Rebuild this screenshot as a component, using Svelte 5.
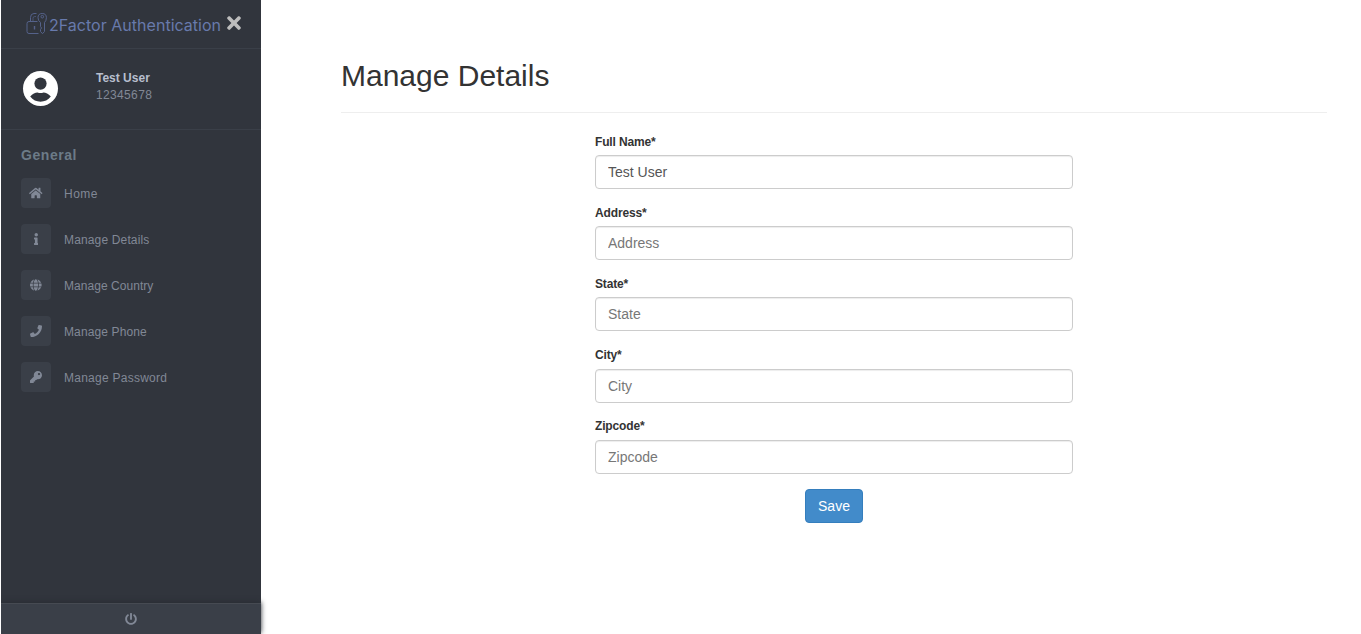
<script>
  const menu = [
    { label: 'Home', spacing: 0.5, w: 576, d: 'M280.37 148.26L96 300.11V464a16 16 0 0 0 16 16l112.06-.29a16 16 0 0 0 15.92-16V368a16 16 0 0 1 16-16h64a16 16 0 0 1 16 16v95.64a16 16 0 0 0 16 16.05L464 480a16 16 0 0 0 16-16V300L295.67 148.26a12.19 12.19 0 0 0-15.3 0zM571.6 251.47L488 182.56V44.05a12 12 0 0 0-12-12h-56a12 12 0 0 0-12 12v72.61L318.47 43a48 48 0 0 0-61 0L4.34 251.47a12 12 0 0 0-1.6 16.9l25.5 31A12 12 0 0 0 45.15 301l235.22-193.74a12.19 12.19 0 0 1 15.3 0L530.9 301a12 12 0 0 0 16.9-1.6l25.5-31a12 12 0 0 0-1.7-16.93z' },
    { label: 'Manage Details', spacing: 0.15, w: 192, d: 'M20 424.229h20V279.771H20c-11.046 0-20-8.954-20-20V212c0-11.046 8.954-20 20-20h112c11.046 0 20 8.954 20 20v212.229h20c11.046 0 20 8.954 20 20V492c0 11.046-8.954 20-20 20H20c-11.046 0-20-8.954-20-20v-47.771c0-11.046 8.954-20 20-20zM96 0C56.235 0 24 32.235 24 72s32.235 72 72 72 72-32.235 72-72S135.764 0 96 0z' },
    { label: 'Manage Country', spacing: 0.05, w: 496, d: 'M336.5 160C322 70.7 287.8 8 248 8s-74 62.7-88.5 152h177zM152 256c0 22.2 1.2 43.5 3.3 64h185.3c2.1-20.5 3.3-41.8 3.3-64s-1.2-43.5-3.3-64H155.3c-2.1 20.5-3.3 41.8-3.3 64zm324.7-96c-28.6-67.9-86.5-120.4-158-141.6 24.4 33.8 41.2 84.7 50 141.6h108zM177.2 18.4C105.8 39.6 47.8 92.1 19.3 160h108c8.7-56.9 25.5-107.8 49.9-141.6zM487.4 192H372.7c2.1 21 3.3 42.5 3.3 64s-1.2 43-3.3 64h114.6c5.5-20.5 8.6-41.8 8.6-64s-3.1-43.5-8.5-64zM120 256c0-21.5 1.2-43 3.3-64H8.6C3.2 212.5 0 233.8 0 256s3.2 43.5 8.6 64h114.6c-2-21-3.2-42.5-3.2-64zm39.5 96c14.5 89.3 48.7 152 88.5 152s74-62.7 88.5-152h-177zm159.3 141.6c71.4-21.2 129.4-73.7 158-141.6h-108c-8.8 56.9-25.6 107.8-50 141.6zM19.3 352c28.6 67.9 86.5 120.4 158 141.6-24.4-33.8-41.2-84.7-50-141.6h-108z' },
    { label: 'Manage Phone', spacing: 0.12, w: 512, d: 'M493.4 24.6l-104-24c-11.3-2.6-22.9 3.3-27.5 13.9l-48 112c-4.2 9.8-1.4 21.3 6.9 28l60.6 49.6c-36 76.7-98.9 140.5-177.2 177.2l-49.6-60.6c-6.8-8.3-18.2-11.1-28-6.9l-112 48C3.9 366.5-2 378.1.6 389.4l24 104C27.1 504.2 36.7 512 48 512c256.1 0 464-207.5 464-464 0-11.2-7.7-20.9-18.6-23.4z' },
    { label: 'Manage Password', spacing: 0.25, w: 512, d: 'M512 176.001C512 273.203 433.202 352 336 352c-11.22 0-22.19-1.062-32.827-3.069l-24.012 27.014A23.999 23.999 0 0 1 261.223 384H224v40c0 13.255-10.745 24-24 24h-40v40c0 13.255-10.745 24-24 24H24c-13.255 0-24-10.745-24-24v-78.059c0-6.365 2.529-12.47 7.029-16.971l161.802-161.802C163.108 213.814 160 195.271 160 176 160 78.798 238.797.001 335.999 0 433.488-.001 512 78.511 512 176.001zM336 128c0 26.51 21.49 48 48 48s48-21.49 48-48-21.49-48-48-48-48 21.49-48 48z' }
  ];

  let fields = $state([
    { id: 'name', label: 'Full Name', value: 'Test User' },
    { id: 'address', label: 'Address', value: '' },
    { id: 'state', label: 'State', value: '' },
    { id: 'city', label: 'City', value: '' },
    { id: 'zipcode', label: 'Zipcode', value: '' }
  ]);
</script>

<div class="page">
  <nav class="sidebar">
    <div class="brand">
      <svg class="logo" width="24" height="26" viewBox="0 0 24 26">
        <g fill="none" stroke="#55628a" stroke-width="1">
          <path d="M11.5 10.5H3Q1 10.5 1 12.5V20.5Q1 22.5 3 22.5H12.5" />
          <path d="M4.5 10.5V6.5Q4.5 2.5 8 2.5H10.5" />
          <path d="M7 10.5V7.2Q7 5.5 8.8 5.5H10" stroke-width=".7" />
          <path d="M8.5 15V18.5" stroke-width="1.4" />
          <path d="M14.5 11.5Q12 9.7 12 6.7Q12 2.5 16.2 2.5Q20.4 2.5 20.4 6.7Q20.4 9.7 18.5 11.5V20.5L16.5 22.7L14.5 20.5V18.5L15.5 17L14.5 15.5Z" />
          <circle cx="16.3" cy="5.7" r="1.3" />
        </g>
      </svg>
      <span class="name">2Factor Authentication</span>
      <button class="close" aria-label="Close">
        <svg width="14" height="20" viewBox="0 0 352 512"><path fill="currentColor" d="M242.72 256l100.07-100.07c12.28-12.28 12.28-32.19 0-44.48l-22.24-22.24c-12.28-12.28-32.19-12.28-44.48 0L176 189.28 75.93 89.21c-12.28-12.28-32.19-12.28-44.48 0L9.21 111.45c-12.28 12.28-12.28 32.19 0 44.48L109.28 256 9.21 356.07c-12.28 12.28-12.28 32.19 0 44.48l22.24 22.24c12.28 12.28 32.2 12.28 44.48 0L176 322.72l100.07 100.07c12.28 12.28 32.2 12.28 44.48 0l22.24-22.24c12.28-12.28 12.28-32.19 0-44.48L242.72 256z" /></svg>
      </button>
    </div>

    <div class="profile">
      <svg width="37" height="37" viewBox="-.5 -.5 37 37">
        <circle cx="18" cy="18" r="17.5" fill="#fff" />
        <circle cx="18" cy="13.1" r="6.1" fill="#31353d" />
        <path fill="#31353d" d="M7.7 26.1C10 23.2 12.8 22 15 22Q18 23.1 21 22C23.2 22 26 23.2 28.3 26.1C25.7 29.5 22 31.3 18 31.3S10.3 29.5 7.7 26.1Z" />
      </svg>
      <div class="who">
        <strong>Test User</strong>
        <span>12345678</span>
      </div>
    </div>

    <div class="menu">
      <h2>General</h2>
      {#each menu as item}
        <a href="#top">
          <i><svg width={(item.w / 512) * 12} height="12" viewBox="0 0 {item.w} 512"><path fill="currentColor" d={item.d} /></svg></i>
          <span style="letter-spacing: {item.spacing}px">{item.label}</span>
        </a>
      {/each}
    </div>

    <div class="footer">
      <svg width="12" height="12" viewBox="0 0 512 512"><path fill="currentColor" d="M400 54.1c63 45 104 118.6 104 201.9 0 136.8-110.8 247.7-247.5 248C120 504.3 8.2 393 8 256.4 7.9 173.1 48.9 99.3 111.8 54.2c11.7-8.3 28-4.8 35 7.7L162.6 90c5.9 10.5 3.1 23.8-6.6 31-41.5 30.8-68 79.6-68 134.9-.1 92.3 74.5 168.1 168 168.1 91.6 0 168.6-74.2 168-169.1-.3-51.8-24.7-101.8-68.1-134-9.7-7.2-12.4-20.5-6.5-30.9l15.8-28.1c7-12.4 23.2-16.1 34.8-7.8zM296 264V24c0-13.3-10.7-24-24-24h-32c-13.3 0-24 10.7-24 24v240c0 13.3 10.7 24 24 24h32c13.3 0 24-10.7 24-24z" /></svg>
    </div>
  </nav>

  <main>
    <h1>Manage Details</h1>
    <form>
      {#each fields as field}
        <div class="field">
          <label for={field.id}>{field.label}*</label>
          <input id={field.id} placeholder={field.label} bind:value={field.value} />
        </div>
      {/each}
      <button class="save" type="button">Save</button>
    </form>
  </main>
</div>

<style>
  :global(body) {
    background: #fff;
    overflow: hidden;
  }
  .page, .page :global(*) {
    box-sizing: border-box;
  }
  .page {
    display: flex;
    height: 634px;
    padding-left: 1px;
    font-family: "Liberation Sans", Arial, sans-serif;
    color: #333;
  }
  svg {
    display: block;
  }
  .sidebar {
    width: 260px;
    flex: none;
    display: flex;
    flex-direction: column;
    background: #31353d;
    color: #818896;
    clip-path: inset(0 -8px 0 0);
  }
  .brand {
    height: 49px;
    flex: none;
    display: flex;
    align-items: flex-start;
    padding: 11px 0 0 25px;
    border-bottom: 1px solid #3a3f48;
  }
  .logo {
    flex: none;
  }
  .name {
    width: 178px;
    margin-left: -1px;
    font: 16px/28px Inter, sans-serif;
    letter-spacing: 0.02px;
    white-space: nowrap;
    color: #687aac;
  }
  .close {
    border: 0;
    padding: 0;
    margin-top: 2px;
    background: none;
    color: #bdbdbd;
  }
  .profile {
    height: 81px;
    flex: none;
    display: flex;
    padding: 21px 0 0 21px;
    gap: 37px;
    border-bottom: 1px solid #3a3f48;
  }
  .who {
    display: flex;
    flex-direction: column;
    font-size: 12px;
    line-height: 17px;
  }
  .who strong {
    color: #b8bfce;
  }
  .who span {
    letter-spacing: 0.35px;
  }
  .menu {
    flex: 1;
    padding: 17px 20px 0;
    display: flex;
    flex-direction: column;
    gap: 16px;
  }
  h2 {
    margin: 0 0 -2px;
    font-size: 14px;
    line-height: 17px;
    letter-spacing: 0.55px;
    color: #6c7b88;
  }
  .menu a {
    display: flex;
    align-items: center;
    gap: 13px;
    height: 30px;
    font-size: 12px;
    color: inherit;
    text-decoration: none;
  }
  .menu a span {
    padding-top: 2px;
  }
  .menu i {
    width: 30px;
    height: 30px;
    border-radius: 4px;
    background: #3a3f48;
    display: flex;
    align-items: center;
    justify-content: center;
  }
  .footer {
    height: 31px;
    flex: none;
    display: flex;
    align-items: center;
    justify-content: center;
    background: #3a3f48;
    border-top: 1px solid #464a52;
    box-shadow: 0 -1px 5px #282c33;
  }
  main {
    flex: 1;
    padding: 56px 34px 0 80px;
  }
  h1 {
    margin: 0 0 19.6px;
    height: 57px;
    border-bottom: 1px solid #eee;
    font-size: 30px;
    font-weight: 400;
    line-height: 40px;
  }
  form {
    width: 478px;
    margin-left: 254px;
    display: flex;
    flex-direction: column;
  }
  .field {
    height: 71.2px;
  }
  label {
    display: block;
    height: 22.4px;
    font-size: 12px;
    line-height: 18px;
    font-weight: 700;
    letter-spacing: -0.15px;
  }
  input {
    display: block;
    width: 100%;
    height: 34px;
    padding: 6px 12px;
    border: 1px solid #ccc;
    border-radius: 4px;
    background: #fff;
    box-shadow: inset 0 1px 1px rgba(0, 0, 0, 0.075);
    font: 14px/20px "Liberation Sans", Arial, sans-serif;
    color: #555;
  }
  input::placeholder {
    color: #777;
    opacity: 1;
  }
  .save {
    align-self: center;
    width: 58px;
    height: 34px;
    padding: 0;
    border: 1px solid #357ebd;
    border-radius: 4px;
    background: #428bca;
    color: #fff;
    font: 14px "Liberation Sans", Arial, sans-serif;
  }
</style>
